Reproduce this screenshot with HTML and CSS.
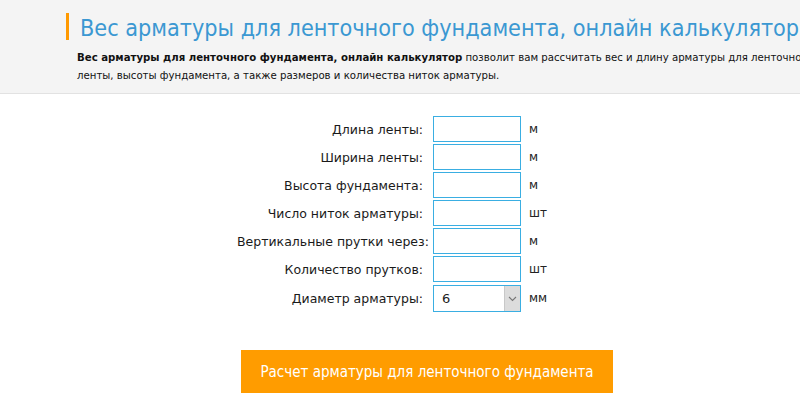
FILE: index.html
```html
<!doctype html>
<html lang="ru">
<head>
  <meta charset="UTF-8">
  <title>Вес арматуры для ленточного фундамента</title>
  <link rel="stylesheet" href="styles.css">
</head>
<body>
  <div class="head">
    <div class="wrap">
      <h1 class="title">Вес арматуры для ленточного фундамента, онлайн калькулятор</h1>
      <p class="descr"><b>Вес арматуры для ленточного фундамента, онлайн калькулятор</b> позволит вам рассчитать вес и длину арматуры для ленточного фундамента в зависимости от длины и ширины<br>ленты, высоты фундамента, а также размеров и количества ниток арматуры.</p>
    </div>
  </div>
  <div class="calc">
    <div class="form">
      <label class="lbl">Длина ленты:</label>
      <input class="fld" type="text">
      <span class="unit">м</span>

      <label class="lbl">Ширина ленты:</label>
      <input class="fld" type="text">
      <span class="unit">м</span>

      <label class="lbl">Высота фундамента:</label>
      <input class="fld" type="text">
      <span class="unit">м</span>

      <label class="lbl">Число ниток арматуры:</label>
      <input class="fld" type="text">
      <span class="unit">шт</span>

      <label class="lbl">Вертикальные прутки через:</label>
      <input class="fld" type="text">
      <span class="unit">м</span>

      <label class="lbl">Количество прутков:</label>
      <input class="fld" type="text">
      <span class="unit">шт</span>

      <label class="lbl">Диаметр арматуры:</label>
      <div class="sel">
        <span class="sel-val">6</span>
        <span class="sel-btn">
          <svg width="9" height="6" viewBox="0 0 9 6"><path d="M1 1 L4.5 4.5 L8 1" fill="none" stroke="#777" stroke-width="1.1"/></svg>
        </span>
      </div>
      <span class="unit">мм</span>
    </div>
    <button class="btn" type="button">Расчет арматуры для ленточного фундамента</button>
  </div>
</body>
</html>
```

FILE: styles.css
```css
html, body {
  margin: 0;
  padding: 0;
}

body {
  font-family: "DejaVu Sans", Verdana, sans-serif;
  color: #222;
  background: #fff;
  overflow: hidden;
}

.head {
  background: #f4f4f4;
  border-bottom: 1px solid #e2e2e2;
  height: 93px;
}

.wrap {
  width: 1000px;
  padding-left: 66px;
  padding-top: 13px;
}

.title {
  margin: 0;
  padding: 3px 0 0 11px;
  border-left: 3px solid #ff9900;
  font-family: "DejaVu Sans Condensed", "DejaVu Sans", sans-serif;
  font-size: 23.2px;
  font-weight: normal;
  line-height: 24px;
  color: #3b98d2;
  white-space: nowrap;
}

.descr {
  margin: 9px 0 0 11px;
  font-family: "DejaVu Sans Condensed", "DejaVu Sans", sans-serif;
  font-size: 11.3px;
  line-height: 18px;
  color: #111;
  white-space: nowrap;
}

.calc {
  padding-top: 22px;
}

.form {
  display: grid;
  grid-template-columns: 190px 88px auto;
  column-gap: 6px;
  row-gap: 2px;
  align-items: center;
  margin-left: 237px;
  width: 330px;
  font-size: 12.5px;
}

.lbl {
  text-align: right;
  padding-right: 4px;
  white-space: nowrap;
  color: #1a1a1a;
}

.fld, .sel {
  box-sizing: border-box;
  width: 88px;
  height: 26px;
  border: 1px solid #3aaee2;
  margin: 0;
  padding: 0 8px;
  background: #fff;
  font-family: inherit;
  font-size: 13px;
}

.sel {
  display: flex;
  align-items: center;
  padding: 0 0 0 8px;
  margin-top: 1px;
  height: 27px;
}

.sel-val {
  flex: 1;
}

.sel-btn {
  width: 15px;
  height: 100%;
  background: #dcdcdc;
  border-left: 1px solid #c8c8c8;
  display: flex;
  align-items: center;
  justify-content: center;
}

.unit {
  font-size: 12px;
  padding-left: 2px;
}

.btn {
  display: block;
  margin: 38px 0 0 241px;
  width: 372px;
  height: 43px;
  border: 0;
  background: #ff9c00;
  color: #fff;
  font-family: "DejaVu Sans Condensed", "DejaVu Sans", sans-serif;
  font-size: 15px;
  cursor: pointer;
}
```
